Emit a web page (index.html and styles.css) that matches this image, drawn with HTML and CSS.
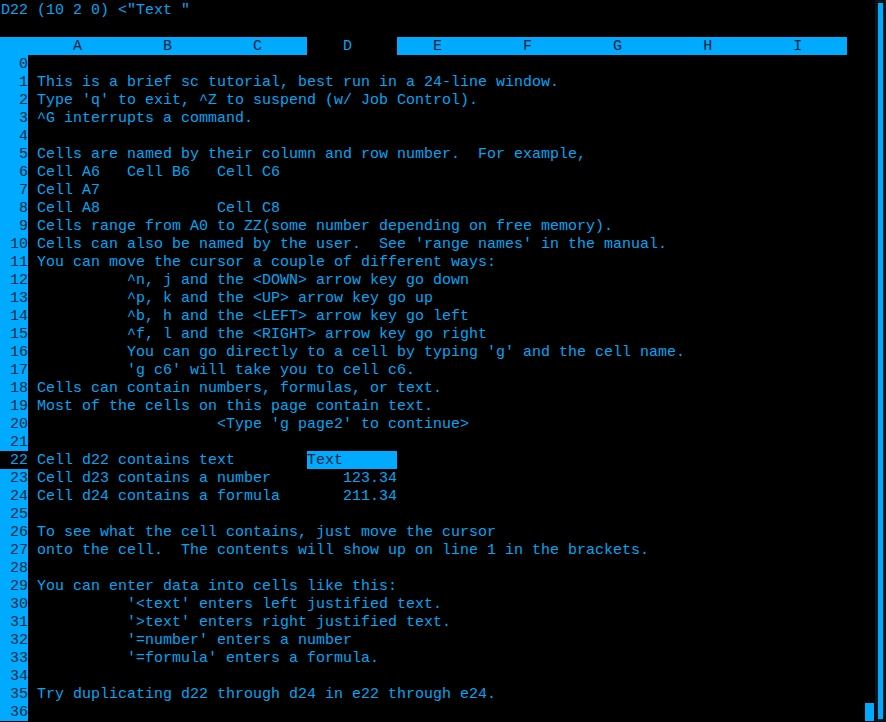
FILE: index.html
```html
<!DOCTYPE html>
<html lang="en">
<head>
    <meta charset="UTF-8">
    <title>sc tutorial</title>
    <link rel="stylesheet" href="styles.css">
</head>
<body>
    <div class="window">
        <div class="term">
            <div class="line">D22 (10 2 0) &lt;"Text "</div>
            <div class="line"></div>

            <div class="line head"><span class="hl first">        A         B         C     </span><span class="col-d">    D     </span><span class="hl">    E         F         G         H         I     </span></div>

            <div class="line"><span class="num">  0</span></div>
            <div class="line"><span class="num">  1</span> This is a brief sc tutorial, best run in a 24-line window.</div>
            <div class="line"><span class="num">  2</span> Type 'q' to exit, ^Z to suspend (w/ Job Control).</div>
            <div class="line"><span class="num">  3</span> ^G interrupts a command.</div>
            <div class="line"><span class="num">  4</span></div>
            <div class="line"><span class="num">  5</span> Cells are named by their column and row number.  For example,</div>
            <div class="line"><span class="num">  6</span> Cell A6   Cell B6   Cell C6</div>
            <div class="line"><span class="num">  7</span> Cell A7</div>
            <div class="line"><span class="num">  8</span> Cell A8             Cell C8</div>
            <div class="line"><span class="num">  9</span> Cells range from A0 to ZZ(some number depending on free memory).</div>
            <div class="line"><span class="num"> 10</span> Cells can also be named by the user.  See 'range names' in the manual.</div>
            <div class="line"><span class="num"> 11</span> You can move the cursor a couple of different ways:</div>
            <div class="line"><span class="num"> 12</span>           ^n, j and the &lt;DOWN&gt; arrow key go down</div>
            <div class="line"><span class="num"> 13</span>           ^p, k and the &lt;UP&gt; arrow key go up</div>
            <div class="line"><span class="num"> 14</span>           ^b, h and the &lt;LEFT&gt; arrow key go left</div>
            <div class="line"><span class="num"> 15</span>           ^f, l and the &lt;RIGHT&gt; arrow key go right</div>
            <div class="line"><span class="num"> 16</span>           You can go directly to a cell by typing 'g' and the cell name.</div>
            <div class="line"><span class="num"> 17</span>           'g c6' will take you to cell c6.</div>
            <div class="line"><span class="num"> 18</span> Cells can contain numbers, formulas, or text.</div>
            <div class="line"><span class="num"> 19</span> Most of the cells on this page contain text.</div>
            <div class="line"><span class="num"> 20</span>                     &lt;Type 'g page2' to continue&gt;</div>
            <div class="line"><span class="num"> 21</span></div>
            <div class="line"><span class="num cur"> 22</span> Cell d22 contains text        <span class="hl">Text      </span></div>
            <div class="line"><span class="num"> 23</span> Cell d23 contains a number        123.34</div>
            <div class="line"><span class="num"> 24</span> Cell d24 contains a formula       211.34</div>
            <div class="line"><span class="num"> 25</span></div>
            <div class="line"><span class="num"> 26</span> To see what the cell contains, just move the cursor</div>
            <div class="line"><span class="num"> 27</span> onto the cell.  The contents will show up on line 1 in the brackets.</div>
            <div class="line"><span class="num"> 28</span></div>
            <div class="line"><span class="num"> 29</span> You can enter data into cells like this:</div>
            <div class="line"><span class="num"> 30</span>           '&lt;text' enters left justified text.</div>
            <div class="line"><span class="num"> 31</span>           '&gt;text' enters right justified text.</div>
            <div class="line"><span class="num"> 32</span>           '=number' enters a number</div>
            <div class="line"><span class="num"> 33</span>           '=formula' enters a formula.</div>
            <div class="line"><span class="num"> 34</span></div>
            <div class="line"><span class="num"> 35</span> Try duplicating d22 through d24 in e22 through e24.</div>
            <div class="line"><span class="num"> 36</span>                                                                                             <span class="caret"> </span></div>
        </div>

        <div class="scrollbar">
            <div class="thumb"></div>
        </div>
    </div>
</body>
</html>
```

FILE: styles.css
```css
html, body {
    margin: 0;
    padding: 0;
    background: #000;
}

.window {
    display: flex;
    width: 886px;
    height: 722px;
    overflow: hidden;
}

.term {
    flex: 1;
    padding: 1px 0 0 1px;
    font-family: "Liberation Mono", "DejaVu Sans Mono", monospace;
    font-size: 15px;
    color: #00a6f2;
    overflow: hidden;
}

.line {
    height: 18px;
    line-height: 19px;
    white-space: pre;
}

/* solid terminal cells: full 18px height */
.hl,
.num,
.caret,
.col-d {
    display: inline-block;
    height: 18px;
    vertical-align: top;
}

.hl {
    background: #00aaff;
    color: #062238;
}

.hl.first {
    margin-left: -1px;
    padding-left: 1px;
}

.col-d {
    color: #00a6f2;
}

.num {
    background: #00aaff;
    color: #0a2c44;
    margin-left: -1px;
    padding-left: 1px;
}

.num.cur {
    background: #000;
    color: #00a6f2;
}

.caret {
    background: #00aaff;
}

.scrollbar {
    width: 11px;
    background: #06141c;
    padding: 3px;
    box-sizing: border-box;
}

.thumb {
    width: 5px;
    height: 100%;
    background: #00aaff;
}
```
